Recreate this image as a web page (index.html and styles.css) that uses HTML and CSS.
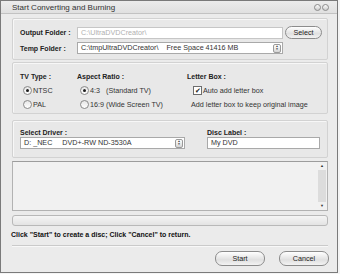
FILE: index.html
```html
<!DOCTYPE html>
<html lang="en">
  <head>
    <meta charset="UTF-8" />
    <title>Start Converting and Burning</title>
    <link rel="stylesheet" href="styles.css">
  </head>
  <body>
    <div class="window">
      <!-- Title bar -->
      <div class="title-bar">
        <span class="title">Start Converting and Burning</span>
        <div class="title-buttons">
          <span class="circle"></span>
          <span class="circle"></span>
        </div>
      </div>

      <div class="content">
        <!-- Folders -->
        <div class="group folders">
          <div class="row">
            <label class="label">Output Folder :</label>
            <div class="field disabled wide">C:\UltraDVDCreator\</div>
            <button class="pill select-btn">Select</button>
          </div>
          <div class="row">
            <label class="label">Temp Folder :</label>
            <div class="field combo wide">
              <span>C:\tmpUltraDVDCreator\&nbsp;&nbsp;&nbsp;&nbsp;Free Space 41416 MB</span>
              <span class="spin"><i>&#9650;</i><i>&#9660;</i></span>
            </div>
          </div>
        </div>

        <!-- Options -->
        <div class="group options">
          <div class="col tv">
            <div class="label">TV Type :</div>
            <div class="opt"><span class="radio on"></span>NTSC</div>
            <div class="opt"><span class="radio"></span>PAL</div>
          </div>
          <div class="col aspect">
            <div class="label">Aspect Ratio :</div>
            <div class="opt"><span class="radio on"></span>4:3&nbsp;&nbsp;&nbsp;(Standard TV)</div>
            <div class="opt"><span class="radio"></span>16:9 (Wide Screen TV)</div>
          </div>
          <div class="col letter">
            <div class="label">Letter Box :</div>
            <div class="opt"><span class="check">&#10004;</span>Auto add letter box</div>
            <div class="opt note">Add letter box to keep original image</div>
          </div>
        </div>

        <!-- Driver -->
        <div class="group driver">
          <div class="col drive-col">
            <div class="label">Select Driver :</div>
            <div class="field combo">
              <span>D:&nbsp;_NEC&nbsp;&nbsp;&nbsp;&nbsp;&nbsp;DVD+-RW ND-3530A</span>
              <span class="spin"><i>&#9650;</i><i>&#9660;</i></span>
            </div>
          </div>
          <div class="col disc-col">
            <div class="label">Disc Label :</div>
            <div class="field">My DVD</div>
          </div>
        </div>

        <!-- Log -->
        <div class="log">
          <div class="log-text"></div>
          <div class="scrollbar">
            <span class="arrow">&#9650;</span>
            <span class="track"></span>
            <span class="arrow">&#9660;</span>
          </div>
        </div>

        <div class="progress"></div>

        <p class="status">Click "Start" to create a disc; Click "Cancel" to return.</p>

        <div class="separator"></div>

        <div class="actions">
          <button class="pill action">Start</button>
          <button class="pill action">Cancel</button>
        </div>
      </div>
    </div>
  </body>
</html>
```

FILE: styles.css
```css
body {
  margin: 0;
  padding: 0;
  background-color: #f4f4f4;
  font-family: "Liberation Sans", Arial, sans-serif;
  font-size: 7.2px;
  color: #333;
}

* {
  box-sizing: border-box;
}

.window {
  width: 338px;
  height: 273px;
  border: 1px solid #7a7a7a;
  background-color: #ebebeb;
  display: flex;
  flex-direction: column;
}

.title-bar {
  height: 13px;
  border-bottom: 1px solid #c2c2c2;
  background: linear-gradient(#ececec, #e0e0e0);
  display: flex;
  align-items: center;
  justify-content: space-between;
  padding: 0 8px 0 11px;
}

.title {
  color: #333;
  font-size: 8px;
}

.title-buttons {
  display: flex;
  gap: 1px;
}

.circle {
  width: 7px;
  height: 7px;
  border: 1px solid #8a8a8a;
  border-radius: 50%;
  background: linear-gradient(#fbfbfb, #cdcdcd);
}

.content {
  padding: 4px 9px 0 11px;
  display: flex;
  flex-direction: column;
}

.group {
  border: 1px solid #d2d2d2;
  border-radius: 2px;
  background-color: #e8e8e8;
  box-shadow: inset 1px 1px 0 #f7f7f7;
}

.label {
  font-weight: bold;
  font-size: 7px;
  line-height: 9px;
  color: #222;
}

/* Folder group */
.folders {
  height: 42px;
  padding: 7px 0 0 7px;
  display: flex;
  flex-direction: column;
  gap: 3px;
}

.row {
  display: flex;
  align-items: center;
}

.row .label {
  width: 57px;
}

.field {
  height: 12px;
  line-height: 10px;
  border: 1px solid #a9a9a9;
  background-color: #fff;
  padding: 0 3px;
  white-space: nowrap;
  overflow: hidden;
}

.field.disabled {
  color: #b0b0b0;
  border-color: #c6c6c6;
}

.wide {
  width: 206px;
}

.combo {
  display: flex;
  justify-content: space-between;
  align-items: center;
  padding-right: 1px;
}

.spin {
  width: 8px;
  height: 9px;
  border: 1px solid #9a9a9a;
  border-radius: 2px;
  background: linear-gradient(#ffffff, #d4d4d4);
  display: flex;
  flex-direction: column;
  align-items: center;
  justify-content: center;
  flex-shrink: 0;
}

.spin i {
  font-style: normal;
  font-size: 3px;
  line-height: 3px;
  color: #333;
}

.pill {
  font-family: "Liberation Sans", Arial, sans-serif;
  font-size: 7.2px;
  color: #222;
  border: 1px solid #8c8c8c;
  border-radius: 7px;
  background: linear-gradient(#ffffff, #e0e0e0 60%, #f3f3f3);
  padding: 0;
}

.select-btn {
  width: 37px;
  height: 13px;
  margin-left: 2px;
}

/* Options group */
.options {
  margin-top: 2px;
  height: 52px;
  padding: 9px 0 0 7px;
  display: flex;
}

.col {
  display: flex;
  flex-direction: column;
}

.tv {
  width: 57px;
}

.aspect {
  width: 110px;
}

.opt {
  display: flex;
  align-items: center;
  margin-top: 5px;
  padding-left: 3px;
  height: 9px;
  white-space: nowrap;
}

.radio {
  width: 9px;
  height: 9px;
  border: 1px solid #8a8a8a;
  border-radius: 50%;
  background: linear-gradient(#e6e6e6, #ffffff);
  margin-right: 1px;
  position: relative;
}

.radio.on::after {
  content: "";
  position: absolute;
  left: 2px;
  top: 2px;
  width: 3px;
  height: 3px;
  border-radius: 50%;
  background: #1e1e1e;
}

.check {
  width: 9px;
  height: 9px;
  border: 1px solid #6d6d6d;
  background: #fff;
  font-size: 7px;
  line-height: 7px;
  text-align: center;
  color: #222;
  margin-right: 1px;
}

.letter .opt {
  padding-left: 6px;
}

.letter .opt.note {
  padding-left: 4px;
}

/* Driver group */
.driver {
  margin-top: 6px;
  height: 38px;
  padding: 7px 0 0 7px;
  display: flex;
}

.drive-col {
  width: 187px;
}

.drive-col .field {
  width: 165px;
}

.disc-col .field {
  width: 113px;
}

/* Log */
.log {
  margin-top: 3px;
  height: 50px;
  border: 1px solid #b2b2b2;
  border-top-color: #9c9c9c;
  background-color: #f1f1f1;
  display: flex;
  justify-content: space-between;
}

.log-text {
  flex: 1;
}

.scrollbar {
  width: 8px;
  margin-right: 1px;
  display: flex;
  flex-direction: column;
  align-items: center;
}

.scrollbar .arrow {
  font-size: 4px;
  line-height: 8px;
  color: #333;
}

.scrollbar .track {
  flex: 1;
  width: 8px;
  background: #dcdcdc;
}

.progress {
  margin-top: 4px;
  height: 11px;
  border: 1px solid #b8b8b8;
  border-radius: 3px;
  background: linear-gradient(#f5f5f5, #e3e3e3);
}

.status {
  margin: 4px 0 0 -1px;
  font-weight: bold;
  font-size: 7px;
  line-height: 9px;
  color: #111;
  white-space: nowrap;
}

.separator {
  margin-top: 6px;
  height: 2px;
  border-top: 1px solid #cacaca;
  border-bottom: 1px solid #f8f8f8;
}

.actions {
  margin-top: 4px;
  margin-right: -1px;
  display: flex;
  justify-content: flex-end;
  gap: 14px;
}

.action {
  width: 50px;
  height: 15px;
}
```
